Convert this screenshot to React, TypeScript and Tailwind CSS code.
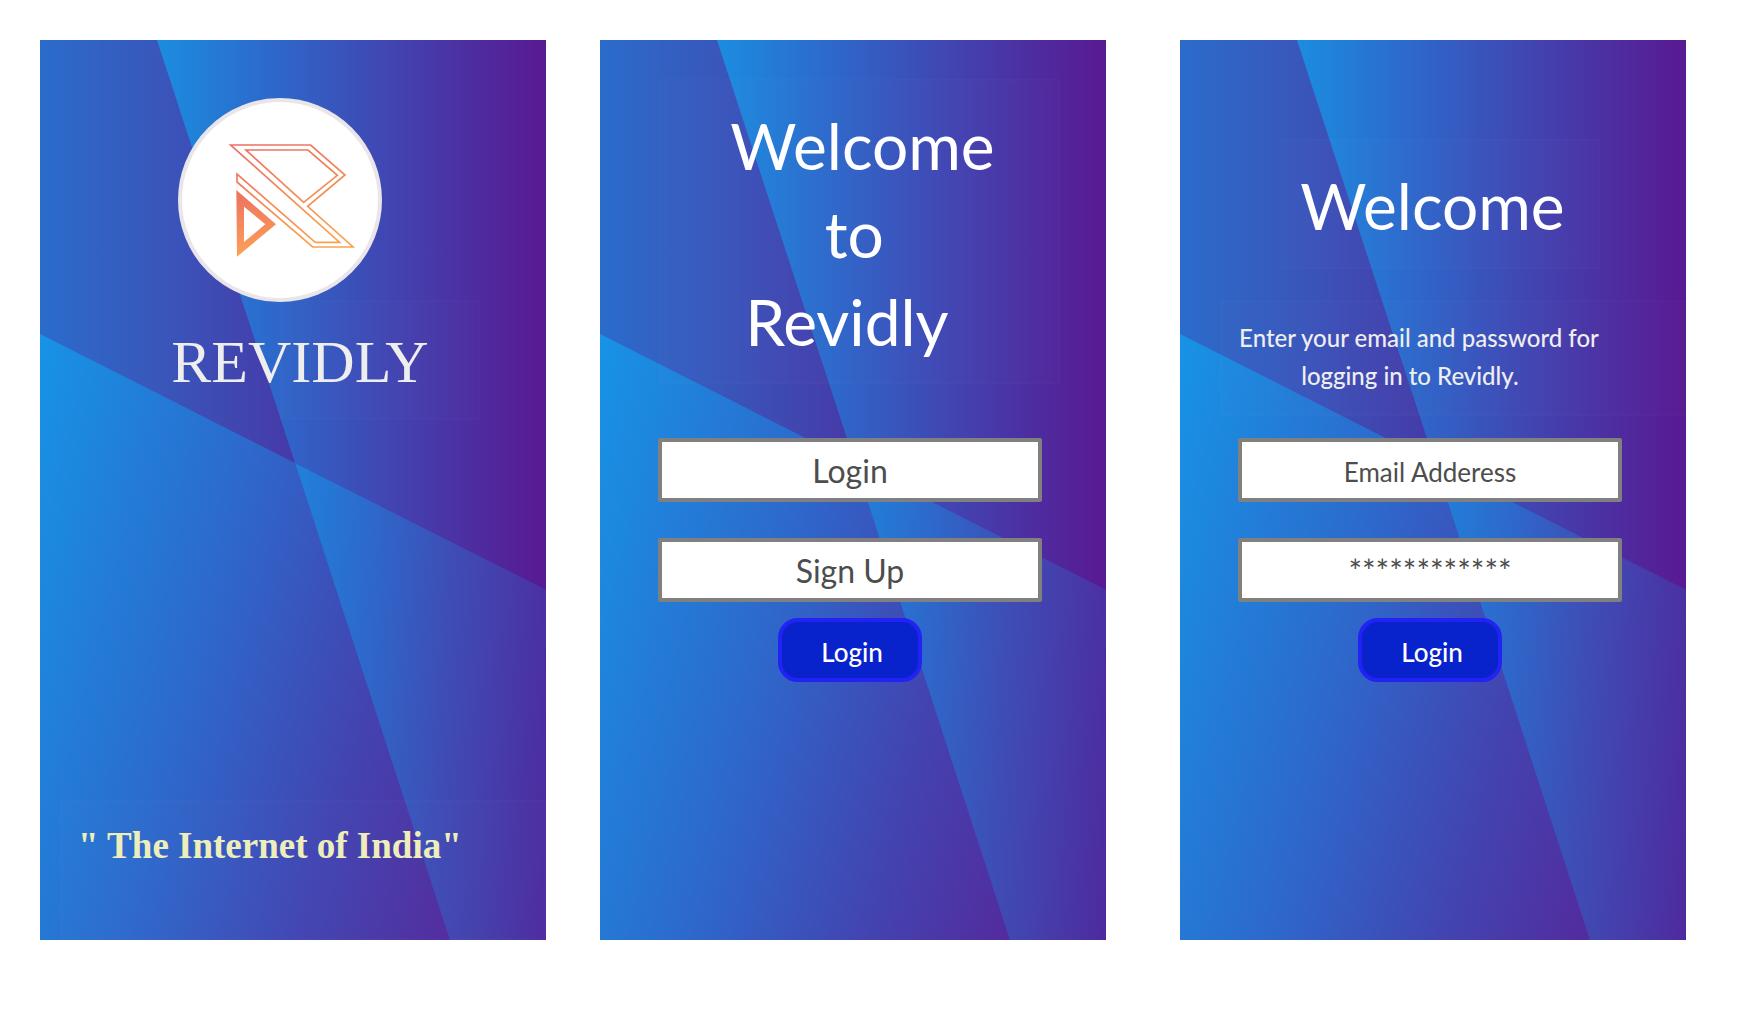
import type { ReactNode } from "react";

function Backdrop({ id }: { id: string }) {
  return (
    <svg
      aria-hidden="true"
      className="absolute inset-0 -z-10 h-full w-full"
      viewBox="0 0 506 900"
      preserveAspectRatio="none"
    >
      <defs>
        <linearGradient id={`${id}-a`} gradientUnits="userSpaceOnUse" x1="0" y1="0" x2="255" y2="0">
          <stop offset="0" stopColor="#2b6ccb" />
          <stop offset="0.5" stopColor="#3a55ba" />
          <stop offset="1" stopColor="#4639a8" />
        </linearGradient>
        <linearGradient id={`${id}-b`} gradientUnits="userSpaceOnUse" x1="117" y1="0" x2="506" y2="0">
          <stop offset="0" stopColor="#1b8de0" />
          <stop offset="0.27" stopColor="#2c6bcd" />
          <stop offset="0.6" stopColor="#4145b1" />
          <stop offset="0.8" stopColor="#4d2ea1" />
          <stop offset="1" stopColor="#591992" />
        </linearGradient>
        <linearGradient id={`${id}-c`} gradientUnits="userSpaceOnUse" x1="0" y1="300" x2="527" y2="432">
          <stop offset="0" stopColor="#1793e5" />
          <stop offset="0.4" stopColor="#2c6bcd" />
          <stop offset="0.75" stopColor="#4343b0" />
          <stop offset="1" stopColor="#532b9d" />
        </linearGradient>
        <linearGradient id={`${id}-d`} gradientUnits="userSpaceOnUse" x1="250" y1="423" x2="535" y2="440">
          <stop offset="0" stopColor="#1f83dc" />
          <stop offset="0.27" stopColor="#2c6bcd" />
          <stop offset="0.6" stopColor="#3f4cb5" />
          <stop offset="1" stopColor="#4e2a9e" />
        </linearGradient>
      </defs>
      <rect width="506" height="900" fill={`url(#${id}-a)`} />
      <path d="M117 0H506V550L255 423Z" fill={`url(#${id}-b)`} />
      <path d="M0 294L255 423L410 900H0Z" fill={`url(#${id}-c)`} />
      <path d="M255 423L506 550V900H410Z" fill={`url(#${id}-d)`} />
    </svg>
  );
}

function Screen({ id, label, className, children }: { id: string; label: string; className: string; children: ReactNode }) {
  return (
    <section
      aria-label={label}
      className={`relative isolate flex min-h-[900px] min-w-0 flex-1 flex-col overflow-hidden ${className}`}
    >
      <Backdrop id={id} />
      {children}
    </section>
  );
}

function Logo() {
  return (
    <div className="size-[204px] rounded-full border-4 border-[#e9e5e9] bg-white">
      <svg role="img" aria-label="Revidly logo" className="size-full" viewBox="66 66 588 588" fill="none">
        <defs>
          <linearGradient id="logo-r" gradientUnits="userSpaceOnUse" x1="300" y1="193" x2="400" y2="502">
            <stop offset="0" stopColor="#ec6f60" />
            <stop offset="1" stopColor="#faa14f" />
          </linearGradient>
          <linearGradient id="logo-play" gradientUnits="userSpaceOnUse" x1="250" y1="350" x2="262" y2="520">
            <stop offset="0" stopColor="#ee7660" />
            <stop offset="1" stopColor="#fb9e57" />
          </linearGradient>
        </defs>
        <g stroke="url(#logo-r)" strokeWidth="5">
          <path d="M212 195H452L555 285L443 379L579 501H458L231 306V282L466 487H539Z" />
          <path d="M258 210H444L532 286L431 367Z" />
        </g>
        <path d="M229 330L348 433L231 530ZM252 380V486L316 433Z" fill="url(#logo-play)" fillRule="evenodd" />
      </svg>
    </div>
  );
}

const frame = "border-2 border-white/[0.012] bg-white/[0.008]";
const field =
  "h-16 w-full rounded-xs border-4 border-[#808080] bg-white text-center text-[#4d4d4d] placeholder:text-[#4d4d4d] placeholder:opacity-100";

function LoginButton() {
  return (
    <button
      type="submit"
      className="h-16 w-36 rounded-[20px] border-4 border-[#2222f5] bg-[#0822cc] pt-1 pl-1 text-[26px] leading-8 font-medium text-white"
    >
      Login
    </button>
  );
}

export default function App() {
  return (
    <main className="flex min-h-screen items-start bg-white py-10 pr-[74px] pl-10 font-['Lato',sans-serif]">
      <Screen id="splash" label="Splash" className="font-['Liberation_Serif',serif]">
        <div className="mt-[58px] mr-[26px] flex justify-center">
          <Logo />
        </div>
        <h1 className="relative -mt-0.5 mr-[66px] ml-20 h-[120px] text-center text-[60px] leading-[124px] text-[#eeeeee] before:absolute before:inset-y-0 before:right-0 before:left-40 before:border-2 before:border-white/[0.012] before:bg-white/[0.008]">
          REVIDLY
        </h1>
        <p
          className={`mt-auto ml-5 h-[140px] pt-5 pl-4 text-[37px] leading-[48px] font-bold whitespace-pre text-[#eeeebb] ${frame}`}
        >
          " The Internet of India"
        </p>
      </Screen>

      <Screen id="start" label="Welcome to Revidly" className="ml-[54px]">
        <h2
          className={`mt-[39px] mr-[46px] ml-[59px] h-[305px] pt-[21px] pl-1.5 text-center text-[64px] leading-[88px] whitespace-pre text-white ${frame}`}
        >
          {"Welcome\nto\u00a0\nRevidly\u00a0\u00a0"}
        </h2>
        <form className="mt-[54px] mr-16 ml-[58px] flex flex-col items-center" onSubmit={(e) => e.preventDefault()}>
          <button type="button" className={`${field} pt-0.5 text-[32px]`}>
            Login
          </button>
          <button type="button" className={`${field} mt-9 mb-4 pt-0.5 text-[32px]`}>
            Sign Up
          </button>
          <LoginButton />
        </form>
      </Screen>

      <Screen id="login" label="Log in" className="ml-[74px]">
        <h2 className={`mt-[99px] mr-[86px] ml-[99px] h-[130px] pt-[21px] pr-3.5 text-center text-[64px] leading-[88px] text-white ${frame}`}>
          Welcome
        </h2>
        <p className={`mt-[31px] -mr-0.5 ml-10 h-[116px] pt-[17px] pr-[86px] pl-4 text-center text-[24px] leading-[38px] font-medium text-[#eeeeee] ${frame}`}>
          Enter your email and password for
          <br />
          logging in to Revidly.{"\u00a0\u00a0\u00a0"}
        </p>
        <form className="mt-[22px] mr-16 ml-[58px] flex flex-col items-center" onSubmit={(e) => e.preventDefault()}>
          <input type="email" aria-label="Email Adderess" placeholder="Email Adderess" className={`${field} pt-1 text-[26px]`} />
          <input
            type="password"
            aria-label="Password"
            placeholder="************"
            className={`${field} mt-9 mb-4 text-[32px]`}
          />
          <LoginButton />
        </form>
      </Screen>
    </main>
  );
}
